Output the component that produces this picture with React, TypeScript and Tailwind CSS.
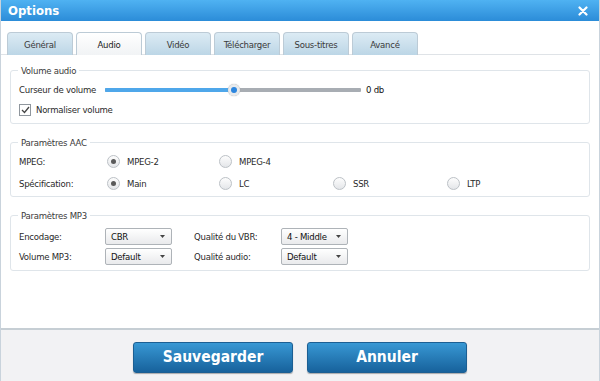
import React from 'react';

const tabs = ['Général', 'Audio', 'Vidéo', 'Télécharger', 'Sous-titres', 'Avancé'];

function Group({ title, children, className = '' }: { title: string; children: React.ReactNode; className?: string }) {
  return (
    <div className={`relative mx-[9px] rounded-[3px] border border-[#dfe5ea] ${className}`}>
      <span className="absolute -top-[7px] left-[7px] bg-white px-[3px] leading-[13px] text-[#3a3a3a]">{title}</span>
      {children}
    </div>
  );
}

function Radio({ checked }: { checked?: boolean }) {
  return (
    <span className="flex h-[13px] w-[13px] items-center justify-center rounded-full border border-[#bcc1c6] bg-gradient-to-b from-[#fdfdfd] to-[#e4e6e9]">
      {checked && <span className="h-[5px] w-[5px] rounded-full bg-[#5a5a5a]" />}
    </span>
  );
}

function RadioItem({ label, checked, w }: { label: string; checked?: boolean; w: string }) {
  return (
    <div className={`flex items-center gap-[7px] ${w}`}>
      <Radio checked={checked} />
      <span>{label}</span>
    </div>
  );
}

function Select({ value }: { value: string }) {
  return (
    <div className="flex h-[17px] w-[67px] items-center justify-between rounded-[2px] border border-[#aeb3b8] bg-gradient-to-b from-[#ffffff] to-[#e9eaec] pl-[5px] pr-[6px]">
      <span className="text-[#111]">{value}</span>
      <svg width="5" height="3" viewBox="0 0 5 3"><path d="M0 0h5L2.5 3z" fill="#444" /></svg>
    </div>
  );
}

export default function App() {
  return (
    <div
      className="flex h-[381px] w-[600px] flex-col overflow-hidden border-x border-[#c9d3dc] bg-white leading-[13px] tracking-[-0.25px] text-[#2a2a2a]"
      style={{ fontFamily: '"DejaVu Sans Condensed", "DejaVu Sans", sans-serif', fontSize: '9.5px' }}
    >
      <div className="flex h-[21px] shrink-0 items-center justify-between bg-gradient-to-b from-[#4fb2f2] to-[#2b8cd8] px-[7px] tracking-normal">
        <span className="text-[13px] font-bold text-white">Options</span>
        <svg width="10" height="10" viewBox="0 0 10 10" className="mr-[4px]">
          <path d="M1.5 1.5l7 7M8.5 1.5l-7 7" stroke="white" strokeWidth="2.2" strokeLinecap="round" />
        </svg>
      </div>

      <div className="mr-[9px] mt-[11px] flex h-[23px] shrink-0 items-end gap-[3px] border-b border-[#dfe3e7] pl-[6px]">
        {tabs.map((t) => (
          <div
            key={t}
            className={`-mb-px flex h-[23px] w-[66px] items-center justify-center rounded-t-[4px] border border-b-0 border-[#bccbd6] ${
              t === 'Audio'
                ? 'bg-gradient-to-b from-[#ffffff] to-[#f1f3f5] text-[#222]'
                : 'bg-gradient-to-b from-[#dcebf4] to-[#bcd6e6] text-[#3a3a3a]'
            }`}
          >
            {t}
          </div>
        ))}
      </div>

      <Group title="Volume audio" className="mt-[15px] h-[54px] shrink-0">
        <div className="flex items-center pl-[8px] pt-[12px]">
          <span className="w-[86px]">Curseur de volume</span>
          <div className="relative flex h-[4px] w-[256px] rounded-[1px] bg-[#a8adb3]">
            <div className="h-full w-[129px] rounded-[1px] bg-[#4fa7ea]" />
            <div className="absolute -top-[4px] left-[123px] flex h-[12px] w-[12px] items-center justify-center rounded-full bg-[#e8eaec] shadow-[0_0_1px_#999]">
              <span className="h-[6px] w-[6px] rounded-full bg-[#2d86de]" />
            </div>
          </div>
          <span className="ml-[5px] text-[#111]">0 db</span>
        </div>
        <div className="flex items-center gap-[5px] pl-[8px] pt-[7px]">
          <span className="flex h-[12px] w-[12px] items-center justify-center border border-[#8f969d] bg-white">
            <svg width="9" height="8" viewBox="0 0 9 8"><path d="M1 4l2.5 2.5L8 1" stroke="#444" strokeWidth="1.3" fill="none" /></svg>
          </span>
          <span>Normaliser volume</span>
        </div>
      </Group>

      <Group title="Paramètres AAC" className="mt-[18px] h-[55px] shrink-0">
        <div className="flex items-center pl-[8px] pt-[12px]">
          <span className="w-[88px]">MPEG:</span>
          <RadioItem label="MPEG-2" checked w="w-[112px]" />
          <RadioItem label="MPEG-4" w="w-[114px]" />
        </div>
        <div className="flex items-center pl-[8px] pt-[9px]">
          <span className="w-[88px]">Spécification:</span>
          <RadioItem label="Main" checked w="w-[112px]" />
          <RadioItem label="LC" w="w-[114px]" />
          <RadioItem label="SSR" w="w-[114px]" />
          <RadioItem label="LTP" w="w-[114px]" />
        </div>
      </Group>

      <Group title="Paramètres MP3" className="mt-[18px] h-[56px] shrink-0">
        <div className="flex items-center pl-[8px] pt-[12px]">
          <span className="w-[86px]">Encodage:</span>
          <Select value="CBR" />
          <span className="ml-[22px] w-[87px]">Qualité du VBR:</span>
          <Select value="4 - Middle" />
        </div>
        <div className="flex items-center pl-[8px] pt-[3px]">
          <span className="w-[86px]">Volume MP3:</span>
          <Select value="Default" />
          <span className="ml-[22px] w-[87px]">Qualité audio:</span>
          <Select value="Default" />
        </div>
      </Group>

      <div className="flex-1" />

      <div className="flex h-[53px] shrink-0 items-start justify-center gap-[14px] border-t-2 border-[#c6ced4] bg-[#f2f2f4] pt-[12px] tracking-normal">
        {['Sauvegarder', 'Annuler'].map((b) => (
          <button
            key={b}
            className="flex h-[31px] w-[160px] items-center justify-center rounded-[3px] border border-[#1c5f93] bg-gradient-to-b from-[#3898d4] to-[#17629c] text-[15.5px] font-bold text-white shadow-[0_1px_1px_rgba(0,0,0,0.3)]"
          >
            {b}
          </button>
        ))}
      </div>
    </div>
  );
}
